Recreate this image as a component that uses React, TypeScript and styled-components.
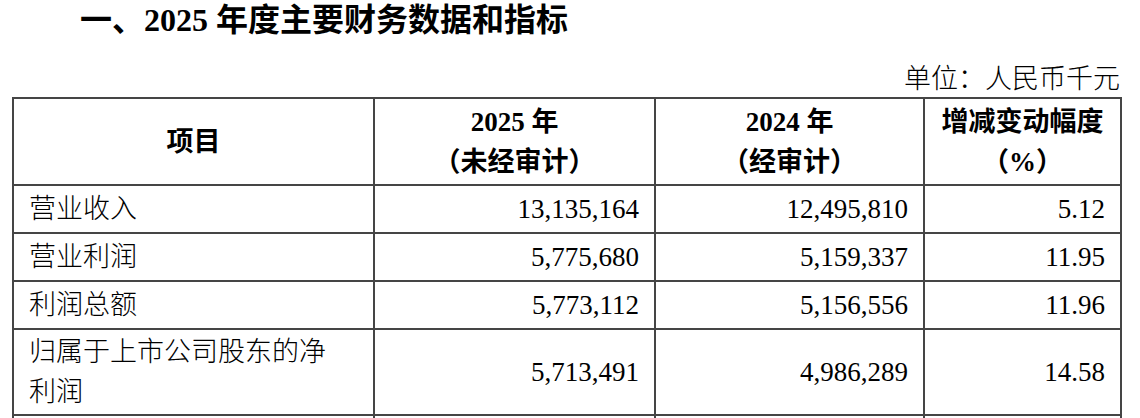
import React from "react";
import styled, { createGlobalStyle } from "styled-components";

const GlobalStyle = createGlobalStyle`
  *, *::before, *::after { box-sizing: border-box; }
  html, body { margin: 0; padding: 0; background: #ffffff; }
  body {
    font-family: "Liberation Serif", "Noto Sans CJK SC", serif;
    color: #000000;
  }
`;

const LINE = "2px solid #454545";

const Page = styled.div`
  width: 1108px;
  margin-left: 12px;
`;

const Title = styled.h2`
  margin: 0;
  padding-left: 68px;
  font-size: 32px;
  line-height: 40px;
  font-weight: 700;
  white-space: nowrap;
`;

const Unit = styled.div`
  margin-top: 22px;
  text-align: right;
  font-size: 27px;
  line-height: 34px;
  font-weight: 300;
  white-space: nowrap;
`;

const Table = styled.table`
  margin-top: 1px;
  width: 1108px;
  table-layout: fixed;
  border-collapse: separate;
  border-spacing: 0;
  border-top: ${LINE};
  border-left: ${LINE};
`;

const Row = styled.tr<{ $h: number }>`
  height: ${(p) => p.$h}px;
`;

const HeadCell = styled.th`
  padding: 0 10px;
  border-right: ${LINE};
  border-bottom: ${LINE};
  text-align: center;
  vertical-align: middle;
  font-size: 27px;
  line-height: 40px;
  font-weight: 700;
  white-space: nowrap;
`;

const Cell = styled.td<{ $num?: boolean }>`
  padding: 0 15px;
  border-right: ${LINE};
  border-bottom: ${LINE};
  text-align: ${(p) => (p.$num ? "right" : "left")};
  vertical-align: middle;
  font-size: 27px;
  line-height: 40px;
  font-weight: 300;
  white-space: nowrap;
`;

type Item = { name: React.ReactNode; y2025: string; y2024: string; pct: string; h: number };

const rows: Item[] = [
  { name: "营业收入", y2025: "13,135,164", y2024: "12,495,810", pct: "5.12", h: 48 },
  { name: "营业利润", y2025: "5,775,680", y2024: "5,159,337", pct: "11.95", h: 48 },
  { name: "利润总额", y2025: "5,773,112", y2024: "5,156,556", pct: "11.96", h: 48 },
  {
    name: (
      <>
        归属于上市公司股东的净
        <br />
        利润
      </>
    ),
    y2025: "5,713,491",
    y2024: "4,986,289",
    pct: "14.58",
    h: 86,
  },
];

export default function App() {
  return (
    <>
      <GlobalStyle />
      <Page>
        <Title>一、2025 年度主要财务数据和指标</Title>
        <Unit>单位：人民币千元</Unit>
        <Table>
          <colgroup>
            <col style={{ width: 361 }} />
            <col style={{ width: 281 }} />
            <col style={{ width: 269 }} />
            <col style={{ width: 197 }} />
          </colgroup>
          <thead>
            <Row $h={87}>
              <HeadCell>项目</HeadCell>
              <HeadCell>
                2025 年<br />（未经审计）
              </HeadCell>
              <HeadCell>
                2024 年<br />（经审计）
              </HeadCell>
              <HeadCell>
                增减变动幅度<br />（%）
              </HeadCell>
            </Row>
          </thead>
          <tbody>
            {rows.map((r, i) => (
              <Row key={i} $h={r.h}>
                <Cell>{r.name}</Cell>
                <Cell $num>{r.y2025}</Cell>
                <Cell $num>{r.y2024}</Cell>
                <Cell $num>{r.pct}</Cell>
              </Row>
            ))}
            <Row $h={48}>
              <Cell />
              <Cell $num />
              <Cell $num />
              <Cell $num />
            </Row>
          </tbody>
        </Table>
      </Page>
    </>
  );
}
